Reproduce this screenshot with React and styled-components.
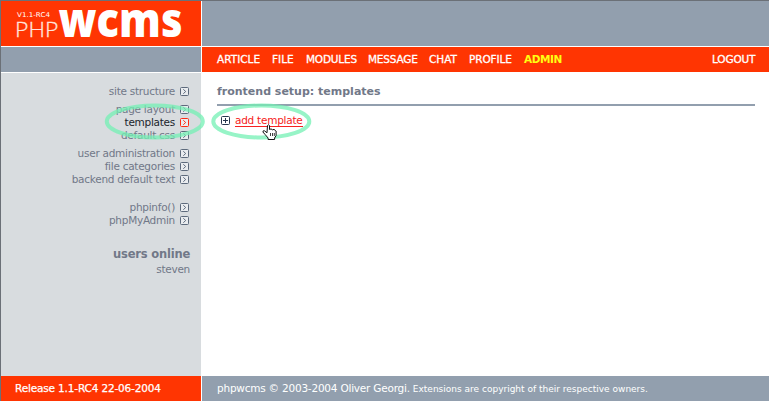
import React from "react";
import styled, { createGlobalStyle } from "styled-components";

const RED = "#ff3502";
const STEEL = "#929fae";

const GlobalStyle = createGlobalStyle`
  * { box-sizing: border-box; }
  body {
    margin: 0;
    background: #fff;
    font-family: "DejaVu Sans", Verdana, sans-serif;
    font-size: 10.5px;
    line-height: 13px;
    color: #717888;
    overflow: hidden;
  }
`;

const Page = styled.div`
  position: relative;
  display: grid;
  grid-template-columns: 200px 1fr;
  grid-template-rows: 45px 1px 25px 1px 303px 25px;
  column-gap: 1px;
  width: 769px;
  height: 401px;
  border-top: 1px solid #6b7077;
  border-left: 1px solid #6b7077;
`;

const Brand = styled.header`
  grid-area: 1 / 1;
  background: ${RED};
`;

const LogoArt = styled.svg`
  display: block;
  overflow: visible;
`;

const Band = styled.div`
  grid-area: ${(p) => p.$area};
  background: ${STEEL};
`;

const Nav = styled.nav`
  grid-area: 3 / 2;
  display: flex;
  align-items: center;
  padding: 0 14px 0 15px;
  background: ${RED};
`;

const NavLink = styled.a`
  flex: none;
  width: ${(p) => p.$width}px;
  white-space: nowrap;
  letter-spacing: ${(p) => p.$spacing || 0}px;
  color: ${(p) => (p.$active ? "#ffff12" : "#fff")};
  font-weight: ${(p) => (p.$active ? 700 : 400)};
  -webkit-text-stroke: ${(p) => (p.$active ? 0 : 0.3)}px currentColor;
  &:last-child { margin-left: auto; }
`;

const Sidebar = styled.aside`
  grid-area: 5 / 1;
  padding: 12px 11px 0 0;
  background: #d8dcdf;
`;

const MenuGroup = styled.ul`
  list-style: none;
  margin: 0 1px ${(p) => p.$after}px 0;
  padding: 0;
`;

const MenuItem = styled.li`
  display: flex;
  justify-content: flex-end;
  align-items: center;
  gap: 5px;
  height: 13px;
  white-space: nowrap;
  letter-spacing: -0.27px;
  color: ${(p) => (p.$active ? "#20242c" : "#717888")};
  svg { color: ${(p) => (p.$active ? "#ff2a12" : "#5d6a7c")}; }
`;

const OnlineTitle = styled.h2`
  margin: 0;
  height: 15px;
  font-size: 11.5px;
  line-height: 15px;
  text-align: right;
  letter-spacing: -0.2px;
`;

const OnlineUser = styled.div`
  text-align: right;
  line-height: 15px;
  letter-spacing: -0.27px;
`;

const Content = styled.main`
  grid-area: 5 / 2;
  padding: 12px 14px 0 15px;
`;

const Title = styled.h1`
  margin: 0;
  height: 21px;
  border-bottom: 2px solid ${STEEL};
  font-size: 11px;
  line-height: 14px;
`;

const AddRow = styled.div`
  display: flex;
  align-items: flex-start;
  gap: 5px;
  padding: 8px 0 0 4px;
  svg { margin-top: 2px; }
`;

const AddLink = styled.a`
  height: 13px;
  color: #f62222;
  border-bottom: 1px solid #f62222;
  line-height: 13px;
  letter-spacing: -0.25px;
`;

const Footer = styled.footer`
  grid-area: 6 / ${(p) => p.$column};
  display: flex;
  align-items: center;
  padding-left: ${(p) => p.$indent}px;
  background: ${(p) => p.$color};
  color: #fff;
  white-space: nowrap;
  letter-spacing: ${(p) => p.$spacing || 0}px;
  -webkit-text-stroke: ${(p) => p.$stroke || 0}px currentColor;
`;

const SmallPrint = styled.small`
  margin-left: 3px;
  padding-top: 1px;
  font-size: 9px;
  letter-spacing: 0;
`;

const Overlay = styled.svg`
  position: absolute;
  left: -1px;
  top: -1px;
  pointer-events: none;
`;

const Logo = () => (
  <LogoArt width="200" height="45" viewBox="1 1 200 45" fill="#fff">
    <text x="17" y="17" fontSize="6.6" textLength="33" lengthAdjust="spacingAndGlyphs" fontFamily="DejaVu Sans">V1.1-RC4</text>
    <text x="15" y="37" fontSize="21" textLength="43.5" lengthAdjust="spacingAndGlyphs" fontFamily="Open Sans" fontWeight="300" fill="#ffe3dc" stroke="#ffe3dc" strokeWidth="0.3">PHP</text>
    <text x="58.5" y="37" fontSize="47" textLength="124" lengthAdjust="spacingAndGlyphs" fontFamily="Open Sans" fontWeight="800">wcms</text>
  </LogoArt>
);

const Arrow = () => (
  <svg width="9" height="9" viewBox="0 0 9 9" fill="none" stroke="currentColor">
    <rect x="0.5" y="0.5" width="8" height="8" rx="1" fill="#e9ecef" />
    <path d="M3.3 2.3 L5.7 4.5 L3.3 6.7" />
  </svg>
);

const Plus = () => (
  <svg width="9" height="9" viewBox="0 0 9 9" fill="none" stroke="#26384e">
    <rect x="0.5" y="0.5" width="8" height="8" rx="1" />
    <path d="M2 4.5 H7 M4.5 2 V7" />
  </svg>
);

const nav = [
  ["ARTICLE", 55, 0], ["FILE", 34, 0], ["MODULES", 62, -0.2], ["MESSAGE", 61, -0.2],
  ["CHAT", 40, 0], ["PROFILE", 55, -0.1], ["ADMIN", 40, -0.4],
];

const groups = [
  { after: 5, items: ["site structure"] },
  { after: 5, items: ["page layout", "templates", "default css"] },
  { after: 15, items: ["user administration", "file categories", "backend default text"] },
  { after: 20, items: ["phpinfo()", "phpMyAdmin"] },
];

export default function App() {
  return (
    <>
      <GlobalStyle />
      <Page>
        <Brand><Logo /></Brand>
        <Band $area="1 / 2" />
        <Band $area="3 / 1" />
        <Nav>
          {nav.map(([label, width, spacing]) => (
            <NavLink key={label} $width={width} $spacing={spacing} $active={label === "ADMIN"}>{label}</NavLink>
          ))}
          <NavLink $width={43} $spacing={-0.15}>LOGOUT</NavLink>
        </Nav>
        <Sidebar>
          {groups.map((group) => (
            <MenuGroup key={group.items[0]} $after={group.after}>
              {group.items.map((label) => (
                <MenuItem key={label} $active={label === "templates"}>
                  {label}<Arrow />
                </MenuItem>
              ))}
            </MenuGroup>
          ))}
          <OnlineTitle>users online</OnlineTitle>
          <OnlineUser>steven</OnlineUser>
        </Sidebar>
        <Content>
          <Title>frontend setup: templates</Title>
          <AddRow><Plus /><AddLink>add template</AddLink></AddRow>
        </Content>
        <Footer $column={1} $indent={14} $color={RED} $stroke={0.25} $spacing={-0.16}>Release 1.1-RC4 22-06-2004</Footer>
        <Footer $column={2} $indent={15} $color={STEEL} $spacing={-0.22}>
          phpwcms © 2003-2004 Oliver Georgi.
          <SmallPrint>Extensions are copyright of their respective owners.</SmallPrint>
        </Footer>
        <Overlay width="769" height="401" viewBox="0 0 769 401" fill="none">
          <g stroke="#74f0b4" strokeOpacity="0.75" strokeWidth="4">
            <ellipse cx="154.8" cy="121.5" rx="48" ry="16" />
            <ellipse cx="261.3" cy="121.5" rx="48" ry="16" />
          </g>
          <path
            d="M267.5 125.5 q1 -1.5 2 0 v4 l1.5 -.6 1.5 .9 1.5 -.4 1.3 1 .8 .6 v4.5 l-1.5 2.5 v1.5 h-6.5 v-1.5 l-3 -3.5 -2.2 -2.5 q0 -1.8 1.6 -1.2 l2.5 2 z"
            fill="#fff" stroke="#111"
          />
          <path d="M270.5 133 v3 M272.5 133 v3 M274.3 133 v3" stroke="#111" strokeWidth="0.8" />
        </Overlay>
      </Page>
    </>
  );
}
